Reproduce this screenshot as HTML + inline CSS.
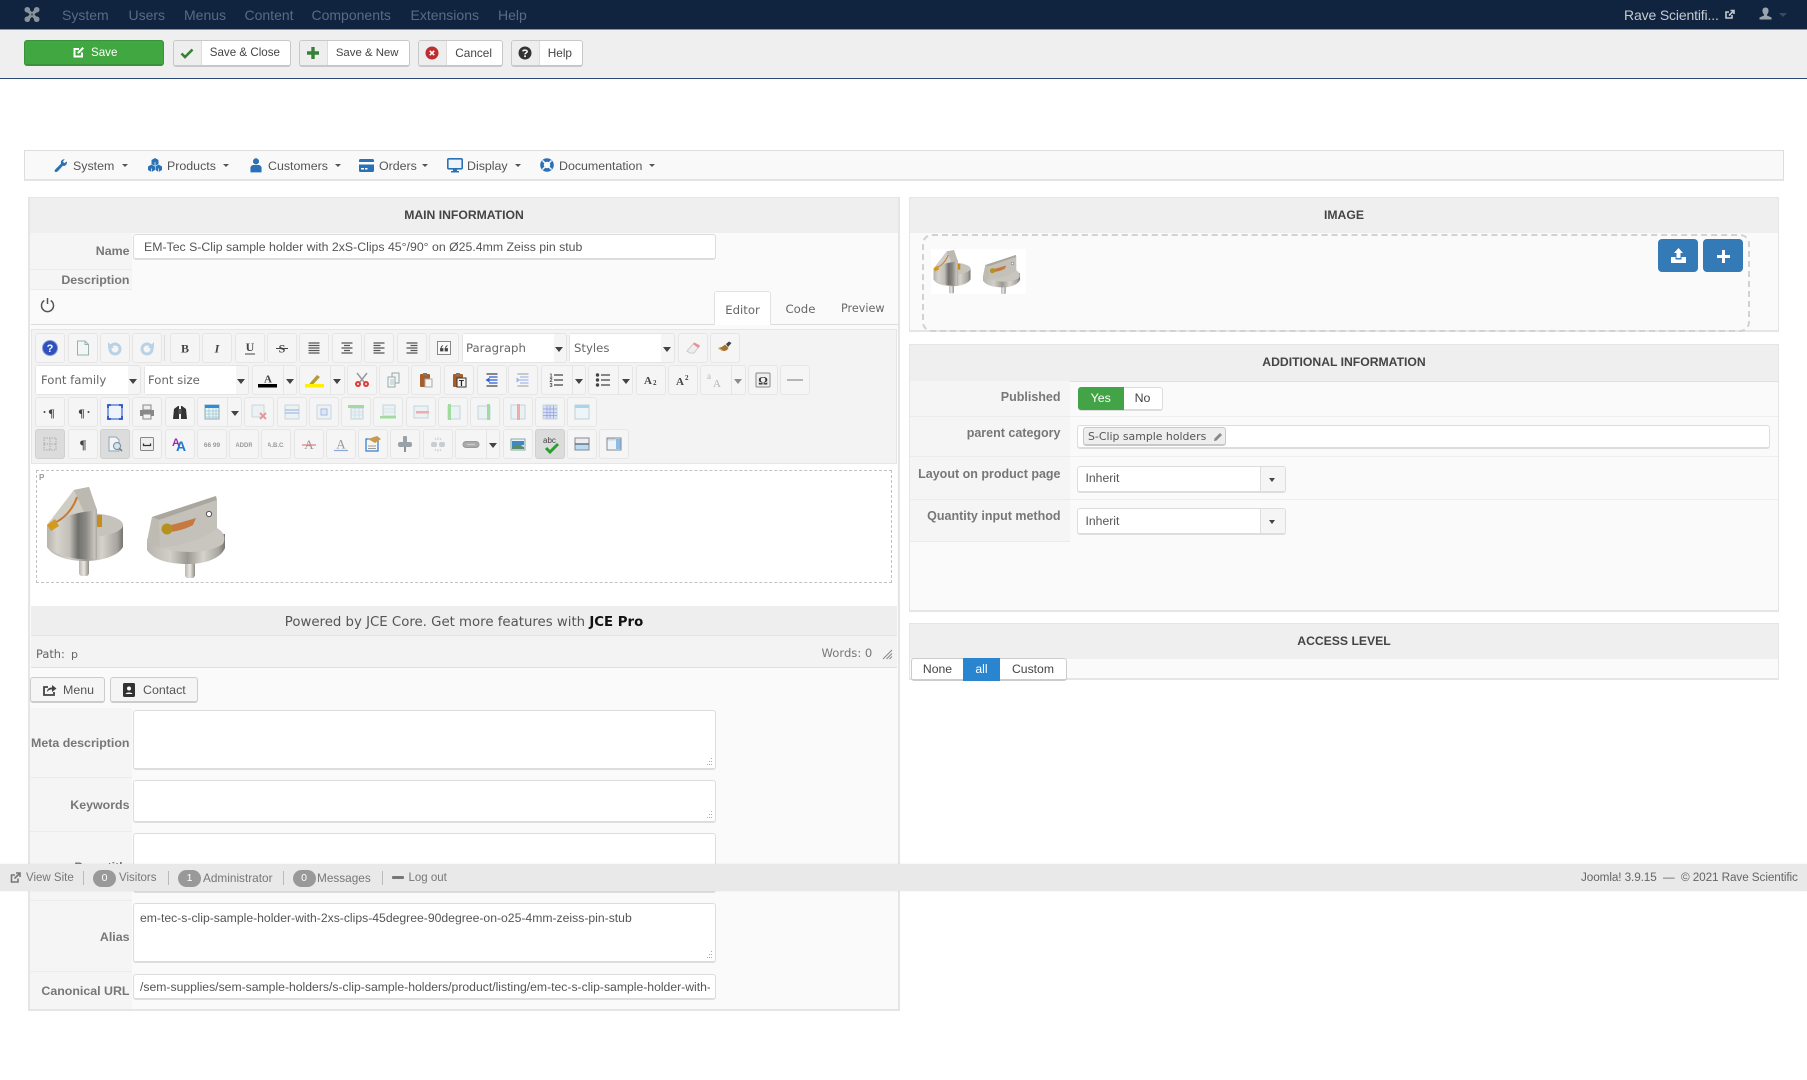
<!DOCTYPE html>
<html lang="en"><head><meta charset="utf-8"><title>EM-Tec S-Clip sample holder</title>
<style>
html,body{margin:0;padding:0;background:#fff}
body{width:1807px;height:1080px;position:relative;overflow:hidden;font-family:"Liberation Sans",sans-serif;font-size:12.4px;color:#555}
.a,.b,.t,.l,.c,.tb,.in,.nv,.ce{position:absolute}
.t{white-space:nowrap}
.tn{color:#5a6b83;font-size:14px;top:5px;line-height:20px}
.tb{top:40px;height:24px;border:1px solid #c8c8c8;border-bottom-width:2px;border-radius:3px;background:#fff;color:#444;font-size:11.8px;line-height:24px;box-sizing:content-box}
.tb i{position:absolute;left:0;top:0;width:27px;height:24px;background:#eee;border-right:1px solid #ddd;border-radius:2px 0 0 2px}
.tb svg{position:absolute;left:6px;top:5px}
.tb span{position:absolute;right:10px;top:0;white-space:nowrap}
.nv{top:150.5px;line-height:30px;font-size:12.4px;color:#555;white-space:nowrap}
.nvc{position:absolute;top:164px;width:0;height:0;border:3.5px solid transparent;border-top-color:#555;border-bottom:0}
.p{position:absolute;border:1px solid #e5e5e5;background:#fafafa;box-sizing:border-box}
.h{position:absolute;left:0;right:0;top:0;height:35px;background:#efefef;text-align:center;font-weight:bold;font-size:12.2px;line-height:34px;color:#444}
.c{background:#f5f5f5;border-bottom:1px solid #ececec;box-sizing:border-box}
.l{text-align:right;font-weight:bold;font-size:12.4px;color:#777;white-space:nowrap}
.in{background:#fff;border:1px solid #ddd;border-bottom-width:2px;border-radius:3px;box-sizing:border-box;overflow:hidden;white-space:nowrap;color:#555}
.b{height:30px;width:30px;box-sizing:border-box;border:1px solid #e6e6e6;border-radius:3px;background:#f5f5f5}
.b>svg{position:absolute;left:6px;top:6px}
.b.act{background:#dcdcdc;border-color:#d0d0d0}
.b .sp{position:absolute;top:0;bottom:0;width:1px;background:#e4e4e4}
.b .ar{position:absolute;top:13px;width:0;height:0;border:4px solid transparent;border-top:5px solid #444;border-bottom:0}
.sel{position:absolute;height:30px;box-sizing:border-box;border:1px solid #e4e4e4;border-radius:3px;background:#f5f5f5}
.sel b{position:absolute;left:0;top:0;bottom:0;background:#fff;font-weight:normal;font:11.7px/28px "DejaVu Sans",sans-serif;color:#666;padding-left:4px;box-sizing:border-box;white-space:nowrap}
.sel .ar{position:absolute;top:13px;right:3px;width:0;height:0;border:4px solid transparent;border-top:5px solid #444;border-bottom:0}
.ds{font-family:"DejaVu Sans",sans-serif}
.fi{top:864px;line-height:28px;font-size:11.8px;color:#777;position:absolute;white-space:nowrap}
.bd{position:absolute;top:870px;width:23px;height:17px;border-radius:9px;background:#999;color:#fff;text-align:center;font-size:10.5px;line-height:17px}
.sepf{position:absolute;top:871px;width:1px;height:14px;background:#bbb}
.grip{position:absolute;right:2px;bottom:2px}
.btn2{position:absolute;top:677px;height:26px;box-sizing:border-box;border:1px solid #ccc;border-bottom-width:2px;border-radius:3px;background:#f5f5f5;color:#555;font-size:12.4px;line-height:24px}
</style></head><body>
<svg width="0" height="0" style="position:absolute"><defs>
<linearGradient id="mt" x1="0" x2="1" y1="0" y2="0"><stop offset="0" stop-color="#b5b2ab"/><stop offset=".2" stop-color="#d6d3cd"/><stop offset=".45" stop-color="#c2bfb8"/><stop offset=".62" stop-color="#716f6b"/><stop offset=".78" stop-color="#8c8a85"/><stop offset=".95" stop-color="#c8c5bf"/><stop offset="1" stop-color="#a9a69f"/></linearGradient>
<linearGradient id="mt2" x1="0" x2="1" y1="0" y2="0"><stop offset="0" stop-color="#b8b5ae"/><stop offset=".3" stop-color="#d2cfc8"/><stop offset=".52" stop-color="#9b9893"/><stop offset=".72" stop-color="#d6d3cc"/><stop offset=".92" stop-color="#a8a5a0"/><stop offset="1" stop-color="#77746f"/></linearGradient>
<linearGradient id="pn" x1="0" x2="1" y1="0" y2="0"><stop offset="0" stop-color="#b9b6ae"/><stop offset=".5" stop-color="#e8e6e0"/><stop offset="1" stop-color="#8e8b85"/></linearGradient>
<symbol id="im1" viewBox="0 0 80 90">
<rect x="33" y="68" width="10" height="21" rx="3" fill="url(#pn)"/>
<path d="M1 38V60C6 69 22 74 39 74C56 74 72 69 77 60V38Z" fill="url(#mt2)"/>
<ellipse cx="40" cy="38" rx="37" ry="12" fill="#c6c3bc"/>
<path d="M1 38 L28 3 L43 0 L51 23 L51 72 C30 74 8 68 1 60Z" fill="url(#mt)"/>
<path d="M1 38 L28 3 L34 12 L38 25 C25 27 10 33 1 38 Z" fill="#d0cdc5"/>
<path d="M28 3 L43 0 L51 23 L38 25Z" fill="#bcb9b1"/>
<path d="M8 36 C18 32 27 22 31 10" fill="none" stroke="#c77a30" stroke-width="2"/>
<path d="M1 38L9 32L13 39L5 44Z" fill="#d29a1e"/>
<path d="M51 28h5v12h-5z" fill="#c48d1d"/>
</symbol>
<symbol id="im2" viewBox="0 0 80 82">
<rect x="39" y="60" width="10" height="22" rx="3" fill="url(#pn)"/>
<path d="M1 43V54C8 65 25 68 42 68C60 68 75 62 79 52V38Z" fill="url(#mt2)"/>
<path d="M6 21 L70 0 L71 32 C78 36 80 42 77 48 C60 60 20 58 1 45 Z" fill="#c9c6bf"/>
<path d="M6 21 L70 0 L71 4 L13 24 Z" fill="#aaa79f"/>
<path d="M1 46 L6 21 L13 24 L14 52 Z" fill="#bebbb3"/>
<path d="M14 52 L13 24 L71 4 L71 32 C60 42 35 50 14 52Z" fill="#c4c1ba"/>
<path d="M20 30 C30 28 40 25 50 22 L47 29 C38 34 28 36 20 36Z" fill="#c77a40"/>
<circle cx="21" cy="33" r="5.500" fill="#b5921f"/>
<circle cx="63" cy="18" r="2.600" fill="#fff" stroke="#555"/>
</symbol>
</defs></svg>

<!-- top bar -->
<div class="a" style="left:0;top:0;width:1807px;height:29px;background:#10233f"></div>
<div class="a" style="left:0;top:29px;width:1807px;height:1px;background:#8a93a0"></div>
<svg class="a" style="left:24px;top:6px" width="16" height="17" viewBox="0 0 17 17"><g fill="none" stroke="#8b929b" stroke-width="3.600"><path d="M4 4L13 13M13 4L4 13"/></g><g fill="#8b929b"><circle cx="3.500" cy="3.500" r="3"/><circle cx="13.500" cy="3.500" r="3"/><circle cx="3.500" cy="13.500" r="3"/><circle cx="13.500" cy="13.500" r="3"/></g><circle cx="8.500" cy="8.500" r="1.200" fill="#4a5668"/></svg>
<div class="t tn" style="left:62px">System</div>
<div class="t tn" style="left:128.500px">Users</div>
<div class="t tn" style="left:184px">Menus</div>
<div class="t tn" style="left:244.500px">Content</div>
<div class="t tn" style="left:311.500px">Components</div>
<div class="t tn" style="left:410.500px">Extensions</div>
<div class="t tn" style="left:498px">Help</div>
<div class="t" style="left:1624px;top:5px;line-height:20px;font-size:14px;color:#c5cad1;letter-spacing:-.15px">Rave Scientifi...</div>
<svg class="a" style="left:1724px;top:9px" width="11" height="11" viewBox="0 0 11 11"><path d="M8 6v3H2V3h3" fill="none" stroke="#c5cad1" stroke-width="1.600"/><path d="M5 6.500L9 2.500M6.500 1.500H10V5" fill="none" stroke="#c5cad1" stroke-width="1.600"/></svg>
<svg class="a" style="left:1759px;top:7px" width="13" height="13" viewBox="0 0 13 13"><path d="M6.500 .5C9 .5 9.800 2.500 9.500 4.500C9.300 6 8.500 7 8 7.500V8.500L12.500 10.500V12.500H.5V10.500L5 8.500V7.500C4.500 7 3.700 6 3.500 4.500C3.200 2.500 4 .5 6.500 .5Z" fill="#9ba3ae"/></svg>
<div class="a" style="left:1779px;top:13px;border:4px solid transparent;border-top-color:#3a4a60;border-bottom:0"></div>

<!-- toolbar -->
<div class="a" style="left:0;top:30px;width:1807px;height:48px;background:#efefef"></div>
<div class="a" style="left:0;top:78px;width:1807px;height:1px;background:#2b4a78"></div>
<div class="a" style="left:24px;top:40px;width:140px;height:26px;background:#41a741;border:1px solid #3a933a;border-bottom-width:2px;border-radius:3px;box-sizing:border-box;color:#fff;font-size:11.600px;line-height:24px;padding-left:66px">Save</div>
<svg class="a" style="left:73px;top:46px" width="12" height="12" viewBox="0 0 12 12"><path d="M9 6.500V10.500H1.500V3H6" fill="none" stroke="#fff" stroke-width="2"/><path d="M4.500 6L9.500 1L11 2.500L6 7.500H4.500Z" fill="#fff"/></svg>
<div class="tb" style="left:173px;width:116px"><i></i><svg width="14" height="14" viewBox="0 0 14 14"><path d="M1.500 7.500L5 11L12.500 3.500" fill="none" stroke="#378137" stroke-width="2.600"/></svg><span style="font-size:11.600px">Save &amp; Close</span></div>
<div class="tb" style="left:299px;width:108.500px"><i></i><svg width="14" height="14" viewBox="0 0 14 14"><path d="M7 1V13M1 7H13" stroke="#378137" stroke-width="3.400"/></svg><span style="font-size:11.400px">Save &amp; New</span></div>
<div class="tb" style="left:418px;width:83px"><i></i><svg width="14" height="14" viewBox="0 0 14 14"><circle cx="7" cy="7" r="6.500" fill="#bd2f2f"/><path d="M4.800 4.800L9.200 9.200M9.200 4.800L4.800 9.200" stroke="#fff" stroke-width="1.500"/></svg><span>Cancel</span></div>
<div class="tb" style="left:511px;width:70px"><i></i><svg width="14" height="14" viewBox="0 0 14 14"><circle cx="7" cy="7" r="6.500" fill="#333"/><path d="M4.800 5.400C5 3.800 9.200 3.600 9.200 5.600C9.200 7 7 6.800 7 8.400" fill="none" stroke="#fff" stroke-width="1.500"/><rect x="6.200" y="9.400" width="1.700" height="1.700" fill="#fff"/></svg><span>Help</span></div>

<!-- nav -->
<div class="a" style="left:24px;top:150px;width:1760px;height:31px;background:#f9f9f9;border:1px solid #ddd;border-bottom:2px solid #e4e4e4;box-sizing:border-box"></div>
<svg class="a" style="left:54px;top:158px" width="14" height="15" viewBox="0 0 15 15"><path d="M1 14C0 13 1 12 3 10L7.500 5.500C6.800 3 8.500 .5 11.500 .8L9.500 3.200L11 5L13.800 3.200C14.500 6 12 8.600 9.500 7.800L4.500 13.200C3 14.500 2 15 1 14Z" fill="#2a72b5"/></svg>
<div class="nv" style="left:73px">System</div><div class="nvc" style="left:122px"></div>
<svg class="a" style="left:148px;top:158px" width="14" height="14" viewBox="0 0 14 14"><g fill="#2a72b5"><path d="M7 0L10.500 2V6L7 8L3.500 6V2Z"/><path d="M3.500 6.500L7 8.500V12L3.500 14L0 12V8.500Z"/><path d="M10.500 6.500L14 8.500V12L10.500 14L7.500 12V8.500Z"/></g><path d="M7 4V8M3.500 10.500V14M10.500 10.500V14" stroke="#fff" stroke-width=".7"/></svg>
<div class="nv" style="left:167px">Products</div><div class="nvc" style="left:222.500px"></div>
<svg class="a" style="left:250px;top:158px" width="12" height="15" viewBox="0 0 13 16"><circle cx="6.500" cy="3.500" r="3.300" fill="#2a72b5"/><path d="M.5 15.500V10.500C.5 8.500 2.500 7.500 4 7.500H9C10.500 7.500 12.500 8.500 12.500 10.500V15.500Z" fill="#2a72b5"/></svg>
<div class="nv" style="left:268px">Customers</div><div class="nvc" style="left:334.500px"></div>
<svg class="a" style="left:359px;top:159px" width="15" height="13" viewBox="0 0 15 13"><rect x="0" y="0" width="15" height="13" rx="1.500" fill="#2a72b5"/><rect x="0" y="3" width="15" height="2.500" fill="#fff"/><rect x="2" y="9" width="3" height="1.500" fill="#fff"/><rect x="6" y="9" width="2.500" height="1.500" fill="#fff"/></svg>
<div class="nv" style="left:379px">Orders</div><div class="nvc" style="left:422px"></div>
<svg class="a" style="left:447px;top:158px" width="16" height="15" viewBox="0 0 16 15"><rect x=".8" y=".8" width="14.400" height="10" rx="1" fill="#eef4fa" stroke="#2a72b5" stroke-width="1.600"/><path d="M6 11.500h4V13h2v1.500H4V13h2Z" fill="#2a72b5"/></svg>
<div class="nv" style="left:467px">Display</div><div class="nvc" style="left:515px"></div>
<svg class="a" style="left:540px;top:158px" width="14" height="14" viewBox="0 0 14 14"><circle cx="7" cy="7" r="5" fill="none" stroke="#2a72b5" stroke-width="3.600"/><path d="M2.500 2.500L5 5M11.500 2.500L9 5M2.500 11.500L5 9M11.500 11.500L9 9" stroke="#fff" stroke-width="1.500"/></svg>
<div class="nv" style="left:559px">Documentation</div><div class="nvc" style="left:649px"></div>

<!-- main panel -->
<div class="p" style="left:28px;top:197px;width:872px;height:814px;border-width:1px 2px 2px 2px">
<div class="h">MAIN INFORMATION</div></div>
<div class="c" style="left:30px;top:233px;width:102px;height:37px"></div>
<div class="c" style="left:30px;top:270px;width:102px;height:20px"></div>
<div class="l" style="left:30px;width:99.500px;top:243px;line-height:16px">Name</div>
<div class="l" style="left:30px;width:99.500px;top:271px;line-height:18px">Description</div>
<div class="in" style="left:133px;top:234px;width:583px;height:26px;line-height:25px;padding-left:10px;font-size:12.300px">EM-Tec S-Clip sample holder with 2xS-Clips 45°/90° on Ø25.4mm Zeiss pin stub</div>

<svg class="a" style="left:40px;top:297px" width="15" height="16" viewBox="0 0 15 16"><path d="M4.300 3.500A6 6 0 1 0 10.700 3.500" fill="none" stroke="#555" stroke-width="1.500"/><path d="M7.500 1V7" stroke="#555" stroke-width="1.500"/></svg>
<div class="a" style="left:31px;top:324px;width:868px;height:1px;background:#ddd"></div>
<div class="a" style="left:714px;top:291px;width:57px;height:34px;background:#fff;border:1px solid #e2e2e2;border-bottom:0;border-radius:3px 3px 0 0;box-sizing:border-box;text-align:center;font:11.700px/37px 'DejaVu Sans',sans-serif;color:#666">Editor</div>
<div class="t ds" style="left:785.500px;top:300px;font-size:11.700px;line-height:18px;color:#666">Code</div>
<div class="t ds" style="left:841px;top:300px;font-size:11.200px;line-height:18px;color:#666">Preview</div>

<div class="a" style="left:31px;top:329px;width:866px;height:135px;background:#f3f3f3;border:1px solid #e6e6e6;border-width:1px 1px 1px 1px;box-sizing:border-box"></div>

<!-- editor row 1 -->
<div class="b" style="left:35px;top:333px"><svg width="16" height="16" viewBox="0 0 16 16"><circle cx="8" cy="8" r="7.500" fill="#2f51c0" stroke="#8a9bd0"/><text x="8" y="12" text-anchor="middle" font-size="11" font-weight="bold" font-family="Liberation Sans" fill="#fff">?</text></svg></div>
<div class="b" style="left:67.500px;top:333px"><svg width="16" height="16" viewBox="0 0 16 16"><path d="M2.500 1H10L13.500 4.500V15H2.500Z" fill="#f1f7f5" stroke="#9ab0ae"/><path d="M10 1V4.500H13.500" fill="none" stroke="#9ab0ae"/></svg></div>
<div class="b" style="left:100px;top:333px"><svg width="16" height="16" viewBox="0 0 16 16" opacity=".45"><circle cx="8" cy="9" r="5" fill="none" stroke="#6fa9d8" stroke-width="3"/><path d="M1 2V8H7Z" fill="#6fa9d8"/></svg></div>
<div class="b" style="left:132px;top:333px"><svg width="16" height="16" viewBox="0 0 16 16" opacity=".45"><circle cx="8" cy="9" r="5" fill="none" stroke="#6fa9d8" stroke-width="3"/><path d="M15 2V8H9Z" fill="#6fa9d8"/></svg></div>
<div class="a" style="left:164px;top:335px;width:1px;height:26px;background:#ddd"></div>
<div class="b" style="left:170px;top:333px"><svg width="16" height="16" viewBox="0 0 16 16"><text x="8" y="12.500" text-anchor="middle" font-size="12" font-weight="bold" font-family="Liberation Serif" fill="#444">B</text></svg></div>
<div class="b" style="left:202px;top:333px"><svg width="16" height="16" viewBox="0 0 16 16"><text x="8" y="12.500" text-anchor="middle" font-size="12" font-weight="bold" font-style="italic" font-family="Liberation Serif" fill="#444">I</text></svg></div>
<div class="b" style="left:235px;top:333px"><svg width="16" height="16" viewBox="0 0 16 16"><text x="8" y="11" text-anchor="middle" font-size="12" font-weight="bold" font-family="Liberation Serif" fill="#444">U</text><path d="M3 14H13" stroke="#444"/></svg></div>
<div class="b" style="left:267px;top:333px"><svg width="16" height="16" viewBox="0 0 16 16"><text x="8" y="12.500" text-anchor="middle" font-size="12" font-weight="bold" font-family="Liberation Serif" fill="#444">S</text><path d="M2 8.500H14" stroke="#444"/></svg></div>
<div class="b" style="left:299px;top:333px"><svg width="16" height="16" viewBox="0 0 16 16"><path d="M2.500 3h11M2.500 5.500h11M2.500 8h11M2.500 10.500h11M2.500 13h11" stroke="#555" stroke-width="1.200"/></svg></div>
<div class="b" style="left:332px;top:333px"><svg width="16" height="16" viewBox="0 0 16 16"><path d="M2.500 3h11M5 5.500h6M2.500 8h11M5 10.500h6M2.500 13h11" stroke="#555" stroke-width="1.200"/></svg></div>
<div class="b" style="left:364px;top:333px"><svg width="16" height="16" viewBox="0 0 16 16"><path d="M2.500 3h11M2.500 5.500h7M2.500 8h11M2.500 10.500h7M2.500 13h11" stroke="#555" stroke-width="1.200"/></svg></div>
<div class="b" style="left:396.500px;top:333px"><svg width="16" height="16" viewBox="0 0 16 16"><path d="M2.500 3h11M6.500 5.500h7M2.500 8h11M6.500 10.500h7M2.500 13h11" stroke="#555" stroke-width="1.200"/></svg></div>
<div class="b" style="left:428.500px;top:333px"><svg width="16" height="16" viewBox="0 0 16 16"><rect x="1.500" y="1.500" width="13" height="13" fill="#fafafa" stroke="#888"/><path d="M4.500 8.500h2.500v2.500h-2.500zM5 8.500C5 7 5.500 6 7 5.500M9 8.500h2.500v2.500H9zM9.500 8.500C9.500 7 10 6 11.500 5.500" fill="#444" stroke="#444" stroke-width=".8"/></svg></div>
<div class="sel" style="left:461.500px;top:333px;width:105px"><b style="width:91px;padding-left:3.500px">Paragraph</b><div class="ar"></div></div>
<div class="sel" style="left:569px;top:333px;width:106px"><b style="width:91px">Styles</b><div class="ar"></div></div>
<div class="b" style="left:677.500px;top:333px"><svg width="16" height="16" viewBox="0 0 16 16"><path d="M2 11L9 3L14.500 6L9 13H5Z" fill="#eee" stroke="#ccc"/><path d="M8 4L9.500 2.500L15 5.500L13 8Z" fill="#e9909c"/></svg></div>
<div class="b" style="left:710px;top:333px"><svg width="16" height="16" viewBox="0 0 16 16"><path d="M1 8C4 7.500 6 6.500 8 4.500L11.500 8C10 11 6 13 1 8Z" fill="#a67432"/><path d="M9 4L12 1.500L14.500 3L11 7Z" fill="#444"/><path d="M2 8L6 11" stroke="#d9b26a"/></svg></div>

<!-- editor row 2 -->
<div class="sel" style="left:35px;top:365px;width:106px"><b style="width:91.500px;padding-left:5px">Font family</b><div class="ar"></div></div>
<div class="sel" style="left:144px;top:365px;width:105px"><b style="width:91px;padding-left:3px">Font size</b><div class="ar"></div></div>
<div class="b" style="left:252px;top:365px;width:45px"><svg width="20" height="16" viewBox="0 0 20 16" style="left:5px"><text x="10" y="10.500" text-anchor="middle" font-size="11" font-weight="bold" font-family="Liberation Serif" fill="#444">A</text><rect x="0" y="12" width="19" height="3.500" fill="#000"/></svg><div class="sp" style="left:30px"></div><div class="ar" style="left:33px"></div></div>
<div class="b" style="left:299px;top:365px;width:45.500px"><svg width="20" height="16" viewBox="0 0 20 16" style="left:5px"><path d="M5 11L12 3L15 5L8 12.500L4.500 12.500Z" fill="#b19b3a"/><rect x="0" y="12" width="19" height="3.500" fill="#ffee00"/></svg><div class="sp" style="left:30px"></div><div class="ar" style="left:33px"></div></div>
<div class="b" style="left:347px;top:365px"><svg width="16" height="16" viewBox="0 0 16 16"><path d="M3 1L10 10M13 1L6 10" stroke="#999" stroke-width="1.500"/><circle cx="4" cy="12" r="3" fill="#e03a3a"/><circle cx="12" cy="12" r="3" fill="#e03a3a"/><circle cx="4" cy="12" r="1" fill="#f5f5f5"/><circle cx="12" cy="12" r="1" fill="#f5f5f5"/></svg></div>
<div class="b" style="left:379px;top:365px"><svg width="16" height="16" viewBox="0 0 16 16"><path d="M6 1H13V11H6Z" fill="#f2f4f4" stroke="#98a8a8"/><path d="M2 5H9V15H2Z" fill="#f5f7f7" stroke="#98a8a8"/><path d="M4 8H8M4 10H8M4 12H8" stroke="#b5c0c0"/></svg></div>
<div class="b" style="left:411px;top:365px"><svg width="16" height="16" viewBox="0 0 16 16"><rect x="2" y="2" width="10" height="13" rx="1" fill="#a85c28"/><rect x="5" y="1" width="4" height="3" fill="#777"/><path d="M7 7H14V15H7Z" fill="#f4f4f4" stroke="#aaa"/></svg></div>
<div class="b" style="left:444px;top:365px"><svg width="16" height="16" viewBox="0 0 16 16"><rect x="2" y="2" width="10" height="13" rx="1" fill="#a85c28"/><rect x="5" y="1" width="4" height="3" fill="#777"/><rect x="6" y="6" width="9" height="9" fill="#f4f4f4" stroke="#333"/><text x="10.500" y="14" text-anchor="middle" font-size="8.500" font-weight="bold" font-family="Liberation Sans" fill="#222">T</text></svg></div>
<div class="b" style="left:476.500px;top:365px"><svg width="16" height="16" viewBox="0 0 16 16"><path d="M2.500 2h11M2.500 14h11" stroke="#444" stroke-width="1.300"/><path d="M5 5h8.500M5 8h8.500M5 11h8.500" stroke="#2a5fd8" stroke-width="1.200"/><path d="M5.500 5.500V10.500L1.500 8Z" fill="#2a5fd8"/></svg></div>
<div class="b" style="left:508px;top:365px"><svg width="16" height="16" viewBox="0 0 16 16" opacity=".4"><path d="M2.500 2h11M2.500 14h11" stroke="#444" stroke-width="1.300"/><path d="M5 5h8.500M5 8h8.500M5 11h8.500" stroke="#2a5fd8" stroke-width="1.200"/><path d="M1.500 5.500V10.500L5.500 8Z" fill="#2a5fd8"/></svg></div>
<div class="b" style="left:541px;top:365px;width:44.500px"><svg width="16" height="16" viewBox="0 0 16 16"><path d="M6 3h9M6 8h9M6 13h9" stroke="#444" stroke-width="1.200"/><text x="3" y="5.500" font-size="5.500" font-weight="bold" text-anchor="middle" font-family="Liberation Sans" fill="#444">1</text><text x="3" y="10" font-size="5.500" font-weight="bold" text-anchor="middle" font-family="Liberation Sans" fill="#444">2</text><text x="3" y="15" font-size="5.500" font-weight="bold" text-anchor="middle" font-family="Liberation Sans" fill="#444">3</text></svg><div class="sp" style="left:30px"></div><div class="ar" style="left:33px"></div></div>
<div class="b" style="left:588px;top:365px;width:45px"><svg width="16" height="16" viewBox="0 0 16 16"><path d="M6 3h9M6 8h9M6 13h9" stroke="#444" stroke-width="1.200"/><circle cx="2.500" cy="3" r="1.700" fill="#444"/><circle cx="2.500" cy="8" r="1.700" fill="#444"/><circle cx="2.500" cy="13" r="1.700" fill="#444"/></svg><div class="sp" style="left:29px"></div><div class="ar" style="left:33px"></div></div>
<div class="b" style="left:635.500px;top:365px"><svg width="16" height="16" viewBox="0 0 16 16"><text x="1" y="12" font-size="11" font-weight="bold" font-family="Liberation Serif" fill="#444">A</text><text x="10" y="13" font-size="7" font-weight="bold" font-family="Liberation Serif" fill="#444">2</text></svg></div>
<div class="b" style="left:668px;top:365px"><svg width="16" height="16" viewBox="0 0 16 16"><text x="1" y="13" font-size="11" font-weight="bold" font-family="Liberation Serif" fill="#444">A</text><text x="10" y="8" font-size="7" font-weight="bold" font-family="Liberation Serif" fill="#444">2</text></svg></div>
<div class="b" style="left:700px;top:365px;width:45.500px"><svg width="16" height="16" viewBox="0 0 16 16" opacity=".4"><text x="0" y="7" font-size="9" font-family="Liberation Serif" fill="#555">a</text><text x="6" y="15" font-size="11" font-family="Liberation Serif" fill="#555">A</text></svg><div class="sp" style="left:30px"></div><div class="ar" style="left:33px;opacity:.6"></div></div>
<div class="b" style="left:747.500px;top:365px"><svg width="16" height="16" viewBox="0 0 16 16"><rect x="1" y="1" width="14" height="14" rx="1" fill="#eee" stroke="#888"/><text x="8" y="12.500" text-anchor="middle" font-size="12" font-weight="bold" font-family="Liberation Serif" fill="#333">Ω</text></svg></div>
<div class="b" style="left:780px;top:365px"><svg width="16" height="16" viewBox="0 0 16 16"><path d="M0 8H16" stroke="#777"/></svg></div>

<!-- editor row 3 -->
<div class="b" style="left:35px;top:397px"><svg width="16" height="16" viewBox="0 0 16 16"><text x="9.500" y="13" text-anchor="middle" font-size="12" font-weight="bold" font-family="Liberation Serif" fill="#444">¶</text><circle cx="2.500" cy="8" r="1" fill="#444"/></svg></div>
<div class="b" style="left:67.500px;top:397px"><svg width="16" height="16" viewBox="0 0 16 16"><text x="6.500" y="13" text-anchor="middle" font-size="12" font-weight="bold" font-family="Liberation Serif" fill="#444">¶</text><circle cx="13.500" cy="8" r="1" fill="#444"/></svg></div>
<div class="b" style="left:100px;top:397px"><svg width="16" height="16" viewBox="0 0 16 16"><rect x="1" y="1" width="14" height="14" fill="#eef3fd" stroke="#3a68d8" stroke-width="1.200"/><path d="M1 4V1H4M12 1H15V4M15 12V15H12M4 15H1V12" fill="none" stroke="#2a50c8" stroke-width="1.800"/></svg></div>
<div class="b" style="left:132px;top:397px"><svg width="16" height="16" viewBox="0 0 16 16"><rect x="4" y="1" width="8" height="5" fill="#eee" stroke="#888"/><path d="M1 6H15V12H1Z" fill="#888"/><rect x="4" y="10" width="8" height="5" fill="#f2f2f2" stroke="#888"/></svg></div>
<div class="b" style="left:164.500px;top:397px"><svg width="16" height="16" viewBox="0 0 16 16"><path d="M1 15L2 5L6 2H7V15ZM15 15L14 5L10 2H9V15Z" fill="#333"/><rect x="6.500" y="5" width="3" height="5" fill="#555"/></svg></div>
<div class="b" style="left:197px;top:397px;width:44.500px"><svg width="16" height="16" viewBox="0 0 16 16"><rect x="1" y="1" width="14" height="14" fill="#eaf6f6" stroke="#8ab"/><rect x="1" y="1" width="14" height="3" fill="#2a8de0"/><path d="M1 7h14M1 10h14M1 13h14M5 4v11M9 4v11M12 4v11" stroke="#9dc4d0" stroke-width=".7"/></svg><div class="sp" style="left:29px"></div><div class="ar" style="left:33px"></div></div>
<div class="b" style="left:244px;top:397px"><svg width="16" height="16" viewBox="0 0 16 16" opacity=".5"><rect x="1" y="1" width="12" height="12" fill="#e4f0f4" stroke="#9bc"/><path d="M9 9L15 15M15 9L9 15" stroke="#e03a3a" stroke-width="2"/></svg></div>
<div class="b" style="left:276.500px;top:397px"><svg width="16" height="16" viewBox="0 0 16 16" opacity=".5"><rect x="1" y="1" width="14" height="14" fill="#e4f0f4" stroke="#9bc"/><path d="M1 6H15M1 9H15" stroke="#5a83d8" stroke-width="1.200"/></svg></div>
<div class="b" style="left:309px;top:397px"><svg width="16" height="16" viewBox="0 0 16 16" opacity=".5"><rect x="1" y="1" width="14" height="14" fill="#e4f0f4" stroke="#9bc"/><rect x="5" y="5" width="6" height="6" fill="#c5daf0" stroke="#5a83d8"/></svg></div>
<div class="b" style="left:341px;top:397px"><svg width="16" height="16" viewBox="0 0 16 16" opacity=".55"><rect x="3" y="4" width="12" height="11" fill="#e4f0f4" stroke="#9bc"/><rect x="0" y="1" width="16" height="3" fill="#5cc85c"/><path d="M3 8h12M3 11h12M7 4v11M11 4v11" stroke="#9bc" stroke-width=".6"/></svg></div>
<div class="b" style="left:373px;top:397px"><svg width="16" height="16" viewBox="0 0 16 16" opacity=".55"><rect x="3" y="1" width="12" height="11" fill="#e4f0f4" stroke="#9bc"/><rect x="0" y="12" width="16" height="2.500" fill="#5cc85c"/><path d="M3 5h12M3 8h12" stroke="#9bc" stroke-width=".6"/></svg></div>
<div class="b" style="left:406px;top:397px"><svg width="16" height="16" viewBox="0 0 16 16" opacity=".55"><rect x="1" y="2" width="14" height="12" fill="#e4f0f4" stroke="#9bc"/><rect x="3" y="7" width="13" height="2.500" fill="#f07070"/></svg></div>
<div class="b" style="left:438px;top:397px;width:29.500px"><svg width="16" height="16" viewBox="0 0 16 16" opacity=".55"><rect x="3" y="2" width="12" height="13" fill="#e4f0f4" stroke="#9bc"/><rect x="3" y="0" width="3" height="16" fill="#5cc85c"/></svg></div>
<div class="b" style="left:470px;top:397px"><svg width="16" height="16" viewBox="0 0 16 16" opacity=".55"><rect x="1" y="2" width="12" height="13" fill="#e4f0f4" stroke="#9bc"/><rect x="10" y="0" width="3" height="16" fill="#5cc85c"/></svg></div>
<div class="b" style="left:502.500px;top:397px"><svg width="16" height="16" viewBox="0 0 16 16" opacity=".55"><rect x="1" y="1" width="14" height="14" fill="#e4f0f4" stroke="#9bc"/><rect x="7" y="0" width="3" height="16" fill="#f07070"/></svg></div>
<div class="b" style="left:535px;top:397px"><svg width="16" height="16" viewBox="0 0 16 16" opacity=".7"><rect x="1" y="1" width="14" height="14" fill="#c8d8f2" stroke="#b0ccd8"/><path d="M1 5H15M1 8.300H15M1 11.600H15M5 1V15M8 1V15M11.500 1V15" stroke="#6a78d8" stroke-width=".7"/></svg></div>
<div class="b" style="left:567px;top:397px"><svg width="16" height="16" viewBox="0 0 16 16" opacity=".6"><rect x="1" y="1" width="14" height="14" fill="#eaf6fb" stroke="#9bc"/><rect x="1" y="1" width="14" height="3" fill="#7ac0e8"/></svg></div>

<!-- editor row 4 -->
<div class="b act" style="left:35px;top:429px"><svg width="16" height="16" viewBox="0 0 16 16"><rect x="2" y="2" width="12" height="12" fill="none" stroke="#aaa" stroke-dasharray="1.500 1"/><path d="M8 2V14M2 8H14" stroke="#aaa" stroke-dasharray="1.500 1"/></svg></div>
<div class="b" style="left:67.500px;top:429px"><svg width="16" height="16" viewBox="0 0 16 16"><text x="8" y="13" text-anchor="middle" font-size="13" font-weight="bold" font-family="Liberation Serif" fill="#444">¶</text></svg></div>
<div class="b act" style="left:100px;top:429px"><svg width="16" height="16" viewBox="0 0 16 16"><path d="M2 1H9L12 4V15H2Z" fill="#f4f4f4" stroke="#8ab"/><circle cx="10" cy="10" r="3.500" fill="#cfe6ee" stroke="#789"/><path d="M12.500 12.500L15 15" stroke="#777" stroke-width="1.500"/></svg></div>
<div class="b" style="left:132px;top:429px"><svg width="16" height="16" viewBox="0 0 16 16"><rect x="1.500" y="1.500" width="13" height="13" rx="1" fill="#eee" stroke="#888"/><path d="M4.500 7.500V9.500H11.500V7.500" fill="none" stroke="#333" stroke-width="1.300"/></svg></div>
<div class="b" style="left:164.500px;top:429px"><svg width="16" height="16" viewBox="0 0 16 16"><text x="0" y="10" font-size="11" font-weight="bold" font-family="Liberation Sans" fill="#9a2aa8">A</text><text x="4" y="15" font-size="14" font-weight="bold" font-family="Liberation Sans" fill="#1d7ad0">A</text></svg></div>
<div class="b" style="left:197px;top:429px"><svg width="16" height="16" viewBox="0 0 16 16"><text x="8" y="11" text-anchor="middle" font-size="6.500" font-weight="bold" font-family="Liberation Sans" fill="#999">66 99</text></svg></div>
<div class="b" style="left:229px;top:429px"><svg width="16" height="16" viewBox="0 0 16 16"><text x="8" y="11" text-anchor="middle" font-size="6" font-weight="bold" font-family="Liberation Sans" fill="#999">ADDR</text></svg></div>
<div class="b" style="left:261px;top:429px"><svg width="16" height="16" viewBox="0 0 16 16"><text x="8" y="11" text-anchor="middle" font-size="6" font-weight="bold" font-family="Liberation Sans" fill="#999">A.B.C.</text></svg></div>
<div class="b" style="left:294px;top:429px"><svg width="16" height="16" viewBox="0 0 16 16"><text x="8" y="13" text-anchor="middle" font-size="13" font-family="Liberation Serif" fill="#999">A</text><path d="M1 9H15" stroke="#e07a7a" stroke-width="1.200"/></svg></div>
<div class="b" style="left:326px;top:429px"><svg width="16" height="16" viewBox="0 0 16 16"><text x="8" y="12.500" text-anchor="middle" font-size="13" font-family="Liberation Serif" fill="#999">A</text><path d="M1 14.500H15" stroke="#8aa8d8" stroke-width="1.200"/></svg></div>
<div class="b" style="left:358px;top:429px"><svg width="16" height="16" viewBox="0 0 16 16"><rect x="1" y="3" width="12" height="12" fill="#f6f6f0" stroke="#2a7ad0" stroke-width="1.200"/><path d="M3 3L12 0L16 3L10 7Z" fill="#c89a4a"/><path d="M3 10h8M3 12.500h8" stroke="#999"/></svg></div>
<div class="b" style="left:390px;top:429px"><svg width="16" height="16" viewBox="0 0 16 16"><rect x="6" y="0" width="4" height="9" rx="1" fill="#9aa2a8"/><rect x="1" y="6" width="14" height="5" rx="2" fill="#9aa2a8"/><path d="M8 11V16" stroke="#8a9298" stroke-width="2"/></svg></div>
<div class="b" style="left:423px;top:429px"><svg width="16" height="16" viewBox="0 0 16 16" opacity=".4"><rect x="1" y="6" width="6" height="5" rx="2" fill="#8a9298"/><rect x="9" y="6" width="6" height="5" rx="2" fill="#8a9298"/><path d="M8 1V4M5 2L6 4M11 2L10 4M8 13V16M5 15L6 13M11 15L10 13" stroke="#999"/></svg></div>
<div class="b" style="left:455px;top:429px;width:45px"><svg width="18" height="16" viewBox="0 0 18 16"><rect x="1" y="5.500" width="16" height="6" rx="3" fill="#aaa" stroke="#999"/><path d="M5 8.500h8" stroke="#ccc" stroke-width="1.200"/></svg><div class="sp" style="left:30px"></div><div class="ar" style="left:33px"></div></div>
<div class="b" style="left:502.500px;top:429px"><svg width="16" height="16" viewBox="0 0 16 16"><rect x="1" y="3" width="14" height="11" fill="#e8f2f8" stroke="#8aa"/><path d="M2 5H14V9L2 11Z" fill="#3a8ac8"/><path d="M2 11L7 8L14 11V13H2Z" fill="#5a8a6a"/></svg></div>
<div class="b act" style="left:535px;top:429px"><svg width="18" height="18" viewBox="0 0 18 18"><text x="1" y="7" font-size="8" font-family="Liberation Sans" fill="#444">abc</text><path d="M4 12L8 16L16 8" fill="none" stroke="#2aa02a" stroke-width="3"/></svg></div>
<div class="b" style="left:567px;top:429px"><svg width="16" height="16" viewBox="0 0 16 16"><rect x="1" y="2" width="14" height="12" fill="#eee" stroke="#889"/><rect x="1.500" y="8.500" width="13" height="5" fill="#b9dcf2"/><path d="M1 8H15" stroke="#556" stroke-width="1.200"/></svg></div>
<div class="b" style="left:599px;top:429px"><svg width="16" height="16" viewBox="0 0 16 16"><rect x="1" y="2" width="14" height="12" fill="#eef3f8" stroke="#889"/><rect x="10" y="3" width="4.500" height="10" fill="#8abce8"/><rect x="1.500" y="2.500" width="8" height="2" fill="#c9d5de"/></svg></div>

<!-- editor content -->
<div class="a" style="left:31px;top:464px;width:866px;height:142px;background:#fff"></div>
<div class="a" style="left:36px;top:470px;width:856px;height:113px;border:1px dashed #c2c2c2;box-sizing:border-box"></div>
<div class="t" style="left:39px;top:472px;font-size:8px;font-weight:bold;color:#999;line-height:11px">P</div>
<svg class="a" style="left:46px;top:487px" width="80" height="90"><use href="#im1"/></svg>
<svg class="a" style="left:146px;top:496px" width="80" height="82"><use href="#im2"/></svg>

<div class="a ds" style="left:31px;top:606px;width:866px;height:30px;background:#eee;border-bottom:1px solid #e4e4e4;box-sizing:border-box;text-align:center;font-size:13.300px;line-height:33px;color:#555;white-space:nowrap">Powered by JCE Core. Get more features with <b style="color:#111">JCE Pro</b></div>
<div class="a" style="left:31px;top:636px;width:866px;height:32px;background:#f3f3f3;border-bottom:1px solid #e0e0e0;box-sizing:border-box"></div>
<div class="t ds" style="left:36px;top:645px;font-size:11.400px;line-height:18px;color:#666">Path:</div>
<div class="t ds" style="left:71px;top:646px;font-size:11px;line-height:18px;color:#666">p</div>
<div class="t ds" style="left:821.500px;top:644px;font-size:11.600px;line-height:18px;color:#777">Words: 0</div>
<svg class="a" style="left:882px;top:649px" width="11" height="11" viewBox="0 0 11 11"><path d="M1 10L10 1M4.500 10L10 4.500M7.500 10L10 7.500" stroke="#888"/></svg>

<div class="btn2" style="left:30px;width:75px"><svg class="a" style="left:12px;top:6px" width="14" height="12" viewBox="0 0 14 12"><path d="M11 8V11H1V3H5" fill="none" stroke="#444" stroke-width="1.800"/><path d="M4 8C4 5 6 3.500 9 3.500V1L13.500 4.500L9 8V5.500C7 5.500 5.500 6 4 8Z" fill="#444"/></svg><span style="position:absolute;left:32px">Menu</span></div>
<div class="btn2" style="left:110px;width:88px"><svg class="a" style="left:12px;top:5px" width="12" height="14" viewBox="0 0 12 14"><rect x="0" y="0" width="12" height="14" rx="1.500" fill="#333"/><circle cx="6" cy="5.500" r="2" fill="#fff"/><path d="M2.500 11C3 9 9 9 9.500 11Z" fill="#fff"/></svg><span style="position:absolute;left:32px">Contact</span></div>

<!-- meta rows -->
<div class="c" style="left:30px;top:708px;width:102px;height:70px"></div>
<div class="c" style="left:30px;top:778px;width:102px;height:54px"></div>
<div class="c" style="left:30px;top:832px;width:102px;height:69px"></div>
<div class="c" style="left:30px;top:901px;width:102px;height:71px"></div>
<div class="c" style="left:30px;top:972px;width:102px;height:37px;border:0"></div>
<div class="l" style="left:30px;width:99.500px;top:735px;line-height:16px">Meta description</div>
<div class="l" style="left:30px;width:99.500px;top:797px;line-height:16px">Keywords</div>
<div class="l" style="left:30px;width:99.500px;top:859px;line-height:16px">Page title</div>
<div class="l" style="left:30px;width:99.500px;top:929px;line-height:16px">Alias</div>
<div class="l" style="left:30px;width:99.500px;top:983px;line-height:16px">Canonical URL</div>

<div class="in" style="left:133px;top:710px;width:583px;height:60px"><svg class="grip" width="9" height="9" viewBox="0 0 9 9"><path d="M7 1h1v1H7zM5 4h1v1H5zM7 4h1v1H7zM3 7h1v1H3zM5 7h1v1H5zM7 7h1v1H7z" fill="#aaa"/></svg></div>
<div class="in" style="left:133px;top:780px;width:583px;height:43px"><svg class="grip" width="9" height="9" viewBox="0 0 9 9"><path d="M7 1h1v1H7zM5 4h1v1H5zM7 4h1v1H7zM3 7h1v1H3zM5 7h1v1H5zM7 7h1v1H7z" fill="#aaa"/></svg></div>
<div class="in" style="left:133px;top:833px;width:583px;height:60px"></div>
<div class="in" style="left:133px;top:903px;width:583px;height:60px;padding:6px 0 0 6px;line-height:16px;font-size:12.200px">em-tec-s-clip-sample-holder-with-2xs-clips-45degree-90degree-on-o25-4mm-zeiss-pin-stub<svg class="grip" width="9" height="9" viewBox="0 0 9 9"><path d="M7 1h1v1H7zM5 4h1v1H5zM7 4h1v1H7zM3 7h1v1H3zM5 7h1v1H5zM7 7h1v1H7z" fill="#aaa"/></svg></div>
<div class="in" style="left:133px;top:974px;width:583px;height:26px;line-height:25px;font-size:12.200px"><div style="position:absolute;left:6px;right:5px;overflow:hidden;top:0">/sem-supplies/sem-sample-holders/s-clip-sample-holders/product/listing/em-tec-s-clip-sample-holder-with-2xs-clips-45degree</div></div>

<!-- image panel -->
<div class="p" style="left:909px;top:197px;width:870px;height:135px;border-width:1px 1px 2px 1px"><div class="h">IMAGE</div></div>
<div class="a" style="left:921.500px;top:233.500px;width:828px;height:98px;border:2px dashed #d2d2d2;border-radius:10px;box-sizing:border-box"></div>
<div class="a" style="left:931px;top:249px;width:95px;height:45px;background:#fff"></div>
<svg class="a" style="left:933px;top:250px" width="39" height="44"><use href="#im1"/></svg>
<svg class="a" style="left:982px;top:255px" width="39" height="39"><use href="#im2"/></svg>
<div class="a" style="left:1658px;top:239px;width:40px;height:33px;background:#337ab7;border-radius:4px"></div>
<svg class="a" style="left:1671px;top:248px" width="15" height="15" viewBox="0 0 15 15"><path d="M7.500 0L12 5H9.500V10H5.500V5H3Z" fill="#fff"/><path d="M0 9H4.500V11.500H10.500V9H15V15H0Z" fill="#fff"/></svg>
<div class="a" style="left:1703px;top:239px;width:40px;height:33px;background:#337ab7;border-radius:4px"></div>
<svg class="a" style="left:1717px;top:250px" width="13" height="13" viewBox="0 0 13 13"><path d="M6.500 0V13M0 6.500H13" stroke="#fff" stroke-width="3"/></svg>

<!-- additional -->
<div class="p" style="left:909px;top:344px;width:870px;height:268px;border-width:1px 1px 2px 1px"><div class="h" style="height:36px;line-height:34px;border-bottom:1px solid #e0e0e0">ADDITIONAL INFORMATION</div></div>
<div class="c" style="left:910px;top:381px;width:160px;height:36px"></div>
<div class="c" style="left:910px;top:417px;width:160px;height:40px"></div>
<div class="c" style="left:910px;top:457px;width:160px;height:43px"></div>
<div class="c" style="left:910px;top:500px;width:160px;height:42px"></div>
<div class="a" style="left:1070px;top:416px;width:708px;height:1px;background:#eee"></div>
<div class="a" style="left:1070px;top:456px;width:708px;height:1px;background:#eee"></div>
<div class="a" style="left:1070px;top:499px;width:708px;height:1px;background:#eee"></div>
<div class="l" style="left:910px;width:150.500px;top:389px;line-height:16px;font-size:12.500px">Published</div>
<div class="l" style="left:910px;width:150.500px;top:425px;line-height:16px;font-size:12.500px">parent category</div>
<div class="l" style="left:910px;width:150.500px;top:466px;line-height:16px;font-size:12.500px">Layout on product page</div>
<div class="l" style="left:910px;width:150.500px;top:508px;line-height:16px;font-size:12.500px">Quantity input method</div>

<div class="a" style="left:1077.500px;top:386.500px;width:85.500px;height:24px;background:#fff;border:1px solid #ddd;border-bottom-width:2px;border-radius:3px;box-sizing:border-box"></div>
<div class="a" style="left:1077.500px;top:386.500px;width:46.500px;height:23.500px;background:#43a447;border-radius:3px 0 0 3px;color:#fff;text-align:center;font-size:12.400px;line-height:23px">Yes</div>
<div class="t" style="left:1123.500px;width:38px;text-align:center;top:386.500px;line-height:23px;font-size:12.400px;color:#444">No</div>

<div class="in" style="left:1077px;top:425px;width:692.500px;height:24px"></div>
<div class="a" style="left:1083px;top:427px;width:143px;height:19px;background:#eee;border:1px solid #c8c8c8;border-bottom-width:2px;border-radius:3px;box-sizing:border-box;font:10.900px/17px 'DejaVu Sans',sans-serif;color:#555;padding-left:4px;white-space:nowrap">S-Clip sample holders</div>
<svg class="a" style="left:1213px;top:432px" width="10" height="10" viewBox="0 0 10 10"><path d="M1 9L1.500 6.500L7 1L9 3L3.500 8.500Z" fill="#888"/></svg>

<div class="in" style="left:1077px;top:465.500px;width:209px;height:27px;line-height:23.500px;padding-left:7.500px;font-size:12.200px">Inherit<div class="a" style="left:181.500px;top:0;bottom:0;right:0;background:#f5f5f5;border-left:1px solid #ddd"></div><div class="a" style="left:190.500px;top:11px;border:3.500px solid transparent;border-top:4px solid #444;border-bottom:0"></div></div>
<div class="in" style="left:1077px;top:508px;width:209px;height:27px;line-height:24px;padding-left:7.500px;font-size:12.200px">Inherit<div class="a" style="left:181.500px;top:0;bottom:0;right:0;background:#f5f5f5;border-left:1px solid #ddd"></div><div class="a" style="left:190.500px;top:11px;border:3.500px solid transparent;border-top:4px solid #444;border-bottom:0"></div></div>

<!-- access -->
<div class="p" style="left:909px;top:623px;width:870px;height:57px;border-width:1px 1px 2px 1px"><div class="h">ACCESS LEVEL</div></div>
<div class="a" style="left:911px;top:657.500px;width:155.500px;height:23.500px;background:#fff;border:1px solid #ccc;border-bottom-width:2px;border-radius:3px;box-sizing:border-box"></div>
<div class="t" style="left:912px;width:51px;text-align:center;top:657.500px;line-height:23px;font-size:12.200px;color:#444">None</div>
<div class="a" style="left:963px;top:657.500px;width:37px;height:23.500px;background:#2a85d0;text-align:center;line-height:23px;font-size:12.200px;color:#fff">all</div>
<div class="t" style="left:1000px;width:66px;text-align:center;top:657.500px;line-height:23px;font-size:12.200px;color:#444">Custom</div>

<!-- footer -->
<div class="a" style="left:0;top:864px;width:1807px;height:27px;background:#e9e9e9;box-shadow:0 0 2px rgba(0,0,0,.08)"></div>
<svg class="a" style="left:10px;top:872px" width="11" height="11" viewBox="0 0 11 11"><path d="M8 6.500V10H1.500V3H5" fill="none" stroke="#777" stroke-width="1.600"/><path d="M4.500 6.500L9 2M6 1H10V5" fill="none" stroke="#777" stroke-width="1.600"/></svg>
<div class="fi" style="left:26px;font-size:11.500px">View Site</div>
<div class="sepf" style="left:83px"></div>
<div class="bd" style="left:93px">0</div><div class="fi" style="left:119px;font-size:11.500px">Visitors</div>
<div class="sepf" style="left:167.500px"></div>
<div class="bd" style="left:178px">1</div><div class="fi" style="left:203px">Administrator</div>
<div class="sepf" style="left:282.500px"></div>
<div class="bd" style="left:292.500px">0</div><div class="fi" style="left:317px">Messages</div>
<div class="sepf" style="left:382px"></div>
<div class="a" style="left:392px;top:876px;width:12px;height:3px;background:#777;border-radius:1px"></div>
<div class="fi" style="left:408.500px;font-size:11.500px">Log out</div>
<div class="fi" style="left:1581px;font-size:11.750px;letter-spacing:-.1px;color:#666">Joomla! 3.9.15 &nbsp;— &nbsp;© 2021 Rave Scientific</div>
</body></html>
